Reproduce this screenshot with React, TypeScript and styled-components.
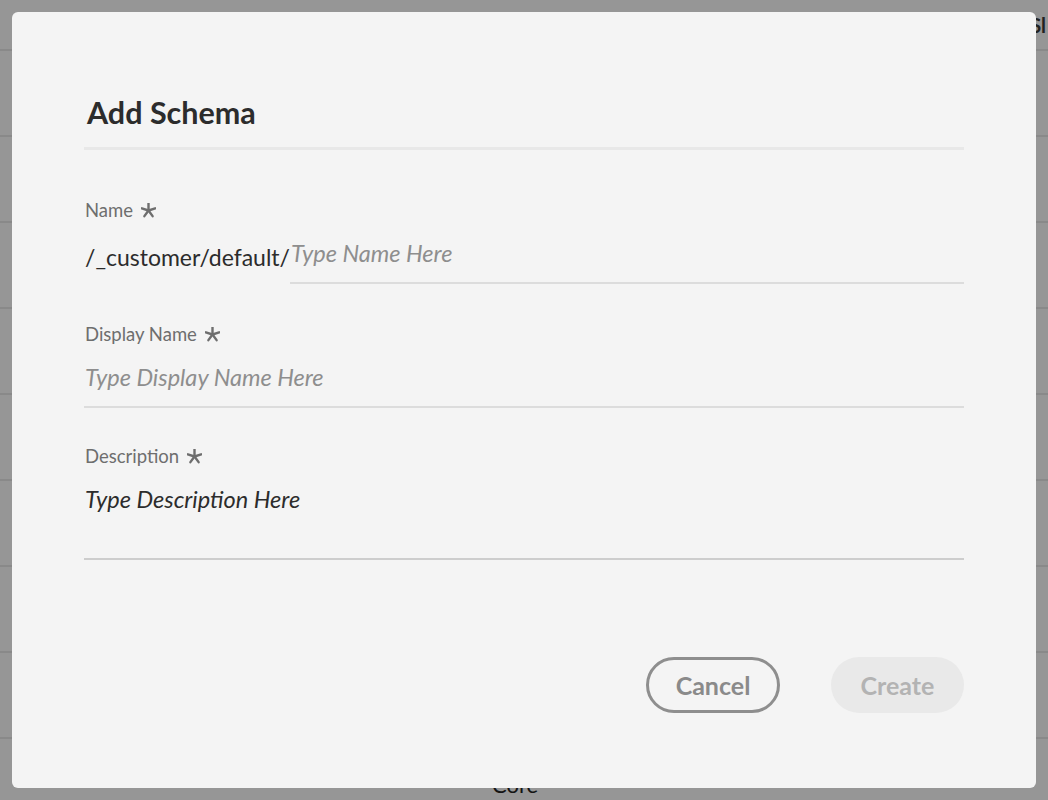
import React from "react";
import styled, { createGlobalStyle } from "styled-components";

const Global = createGlobalStyle`
  html, body { margin: 0; padding: 0; }
  body {
    background: #fafafa;
    font-family: Lato, "Open Sans", sans-serif;
    width: 1048px;
    height: 800px;
    overflow: hidden;
  }
`;

const Page = styled.div`
  display: flex;
  flex-direction: column;
  height: 800px;
  overflow: hidden;
`;

const HeaderRow = styled.div`
  border-bottom: 2px solid #e4e4e4;
  display: flex;
  justify-content: flex-end;
  align-items: center;
  padding-right: 2px;
  flex-shrink: 0;
  box-sizing: border-box;
  height: 51px;
`;

const HeaderText = styled.span`
  font-size: 20px;
  font-weight: 700;
  color: #3a3a3a;
`;

const Row = styled.div`
  height: 86px;
  box-sizing: border-box;
  border-bottom: 2px solid #e4e4e4;
  flex-shrink: 0;
  display: flex;
  justify-content: center;
  align-items: flex-start;
`;

const RowText = styled.span`
  font-size: 22px;
  line-height: 26px;
  color: #222;
  margin-top: 33px;
  margin-left: -18px;
`;

const Overlay = styled.div`
  position: fixed;
  inset: 0;
  background: rgba(0, 0, 0, 0.4);
  display: flex;
  align-items: flex-start;
  justify-content: flex-start;
  padding: 12px;
`;

const Modal = styled.div`
  width: 1024px;
  height: 776px;
  box-sizing: border-box;
  background: #f4f4f4;
  border-radius: 6px;
  padding: 77px 72px 0 72px;
  display: flex;
  flex-direction: column;
`;

const Title = styled.h2`
  margin: 0;
  padding: 0 0 0 3px;
  font-size: 30.5px;
  line-height: 46px;
  font-weight: 700;
  color: #2c2c2c;
  border-bottom: 3px solid #e8e8e8;
  padding-bottom: 12px;
`;

const Form = styled.div`
  display: flex;
  flex-direction: column;
  margin-top: 48px;
`;

const Field = styled.div<{ gap: number }>`
  display: flex;
  flex-direction: column;
  margin-bottom: ${(p) => p.gap}px;
`;

const Label = styled.label`
  display: flex;
  align-items: center;
  gap: 8px;
  font-size: 18.5px;
  line-height: 24px;
  color: #6e6e6e;
  padding-left: 1px;
`;

const InputRow = styled.div`
  display: flex;
  align-items: flex-end;
  margin-top: 12px;
`;

const Prefix = styled.span`
  font-size: 23px;
  line-height: 38px;
  color: #2c2c2c;
  padding-bottom: 8px;
  padding-left: 1px;
`;

const Input = styled.div<{ dark?: boolean; tall?: boolean }>`
  flex: 1;
  font-size: 23.5px;
  line-height: 38px;
  font-style: italic;
  color: ${(p) => (p.dark ? "#2c2c2c" : "#8e8e8e")};
  border-bottom: 2px solid ${(p) => (p.tall ? "#cdcdcd" : "#dcdcdc")};
  height: ${(p) => (p.tall ? 80 : 50)}px;
  box-sizing: border-box;
  padding-left: 1px;
`;

const Footer = styled.div`
  display: flex;
  justify-content: flex-end;
  gap: 51px;
  margin-top: auto;
  margin-bottom: 75px;
`;

const Button = styled.button<{ variant: "secondary" | "primary" }>`
  height: 56px;
  border-radius: 28px;
  box-sizing: border-box;
  font-family: Lato, "Open Sans", sans-serif;
  font-size: 25px;
  font-weight: 700;
  padding: 0;
  width: ${(p) => (p.variant === "secondary" ? 134 : 133)}px;
  border: ${(p) => (p.variant === "secondary" ? "3px solid #8e8e8e" : "none")};
  background: ${(p) => (p.variant === "secondary" ? "transparent" : "#e9e9e9")};
  color: ${(p) => (p.variant === "secondary" ? "#8a8a8a" : "#b3b3b3")};
`;

const Asterisk = () => (
  <svg width="15" height="15" viewBox="-7.5 -7.5 15 15">
    {[-90, -18, 54, 126, 198].map((a) => {
      const r = (a * Math.PI) / 180;
      return (
        <line
          key={a}
          x1={0}
          y1={0}
          x2={Math.cos(r) * 7}
          y2={Math.sin(r) * 7}
          stroke="#6e6e6e"
          strokeWidth={2.4}
          strokeLinecap="round"
        />
      );
    })}
  </svg>
);

export default function App() {
  const rows = Array.from({ length: 9 });
  return (
    <>
      <Global />
      <Page>
        <HeaderRow>
          <HeaderText>Sl</HeaderText>
        </HeaderRow>
        {rows.map((_, i) => (
          <Row key={i}>{i === 8 ? <RowText>Core</RowText> : null}</Row>
        ))}
      </Page>
      <Overlay>
        <Modal>
          <Title>Add Schema</Title>
          <Form>
            <Field gap={38}>
              <Label>
                Name <Asterisk />
              </Label>
              <InputRow>
                <Prefix>/_customer/default/</Prefix>
                <Input>Type Name Here</Input>
              </InputRow>
            </Field>
            <Field gap={36}>
              <Label>
                Display Name <Asterisk />
              </Label>
              <InputRow>
                <Input>Type Display Name Here</Input>
              </InputRow>
            </Field>
            <Field gap={0}>
              <Label>
                Description <Asterisk />
              </Label>
              <InputRow>
                <Input dark tall>
                  Type Description Here
                </Input>
              </InputRow>
            </Field>
          </Form>
          <Footer>
            <Button variant="secondary">Cancel</Button>
            <Button variant="primary">Create</Button>
          </Footer>
        </Modal>
      </Overlay>
    </>
  );
}
